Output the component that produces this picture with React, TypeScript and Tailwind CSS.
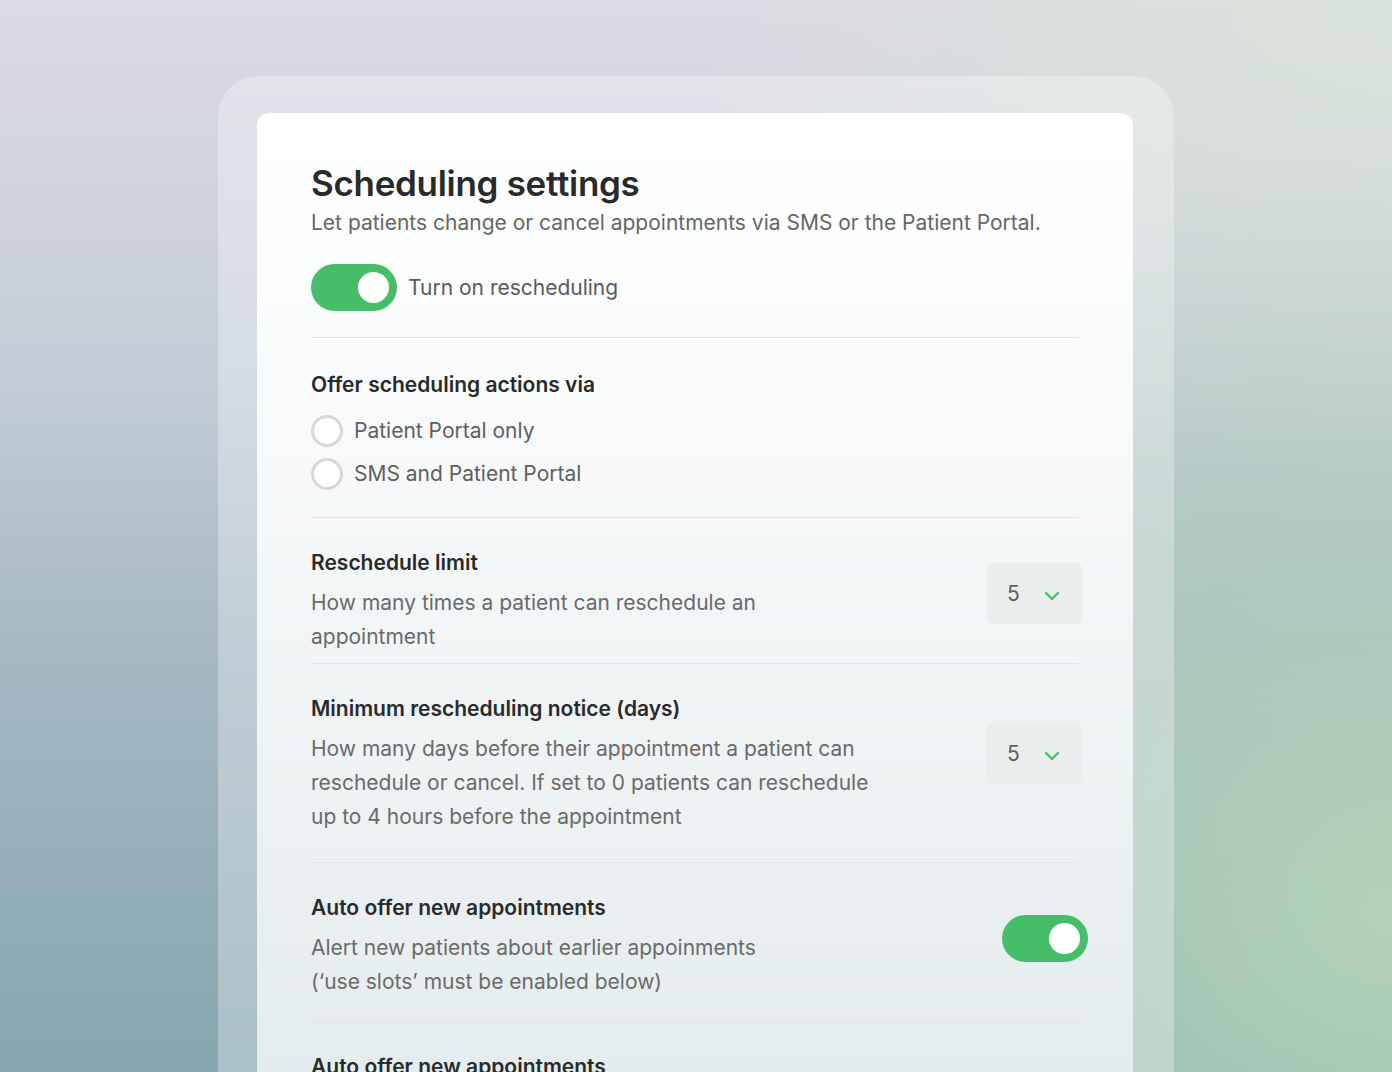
function Toggle() {
  return (
    <div className="flex h-[47px] w-[86px] shrink-0 items-center justify-end rounded-full bg-[#46be69] pr-2">
      <div className="h-[31px] w-[31px] rounded-full bg-white" />
    </div>
  );
}

function Radio({ label }: { label: string }) {
  return (
    <div className="flex items-center gap-[11px]">
      <div className="h-8 w-8 rounded-full border-[3px] border-[#d6d7d8] bg-white" />
      <span className="text-[21px] text-[#5f5f5f]">{label}</span>
    </div>
  );
}

function Select({ top }: { top: string }) {
  return (
    <div className={`${top} -mr-[3px] flex h-[61px] w-[95px] shrink-0 items-center rounded-md bg-[#e9edee] pl-5 pr-[22px]`}>
      <span className="text-[21px] text-[#5f5f5f]">5</span>
      <svg className="ml-auto mt-1" width="16" height="10" viewBox="0 0 16 10" fill="none">
        <path d="M2 2l6 6 6-6" stroke="#46be69" strokeWidth="2.2" strokeLinecap="round" strokeLinejoin="round" />
      </svg>
    </div>
  );
}

function Row({
  title,
  children,
  right,
}: {
  title: string;
  children: React.ReactNode;
  right: React.ReactNode;
}) {
  return (
    <div className="flex items-start justify-between">
      <div className="max-w-[560px]">
        <h3 className="text-[21px] font-semibold leading-[28px] text-[#2a2a2a]">{title}</h3>
        <p className="mt-[9px] text-[21px] leading-[34px] text-[#6a6a6a]">{children}</p>
      </div>
      {right}
    </div>
  );
}

export default function App() {
  return (
    <div className="h-[1072px] overflow-hidden bg-[radial-gradient(ellipse_60%_70%_at_100%_85%,#b2d3b7_0%,rgba(178,211,183,0)_100%),radial-gradient(ellipse_50%_45%_at_100%_0%,#d9e3d9_0%,rgba(217,227,217,0)_100%),linear-gradient(to_bottom,#dcdae4_0%,#c3cdd7_35%,#a6b9c5_60%,#85a6b0_100%)] font-['Inter',sans-serif]">
      <div className="mx-auto mt-[76px] w-[956px] rounded-t-[40px] bg-white/30 pl-[39px] pt-[37px]">
        <div className="h-[1000px] w-[876px] rounded-t-xl bg-[linear-gradient(to_bottom,#ffffff_0%,#f7f9fa_35%,#e3ebed_100%)] px-[54px] pt-[48px]">
          <h1 className="text-[35px] font-semibold leading-[44px] tracking-[-0.3px] text-[#2a2a2a]">
            Scheduling settings
          </h1>
          <p className="mt-[4px] text-[21px] leading-[28px] text-[#666]">
            Let patients change or cancel appointments via SMS or the Patient Portal.
          </p>
          <div className="mt-[27px] flex items-center gap-[11px]">
            <Toggle />
            <span className="text-[21px] text-[#5a5a5a]">Turn on rescheduling</span>
          </div>

          <div className="mt-[26px] border-t border-[#e1e4e6]" />

          <div className="pt-[33px] pb-[27px]">
            <h3 className="text-[21px] font-semibold leading-[28px] text-[#2a2a2a]">
              Offer scheduling actions via
            </h3>
            <div className="mt-[16px] flex flex-col gap-[11px]">
              <Radio label="Patient Portal only" />
              <Radio label="SMS and Patient Portal" />
            </div>
          </div>

          <div className="border-t border-[#e1e4e6]" />

          <div className="pt-[31px] pb-[9px]">
            <Row title="Reschedule limit" right={<Select top="mt-[14px]" />}>
              How many times a patient can reschedule an appointment
            </Row>
          </div>

          <div className="border-t border-[#e1e4e6]" />

          <div className="pt-[31px] pb-[28px]">
            <Row title="Minimum rescheduling notice (days)" right={<Select top="mt-[28px]" />}>
              How many days before their appointment a patient can reschedule or cancel. If set to 0
              patients can reschedule up to 4 hours before the appointment
            </Row>
          </div>

          <div className="border-t border-[#e1e4e6]" />

          <div className="pt-[31px] pb-[23px]">
            <Row
              title="Auto offer new appointments"
              right={
                <div className="-mr-[9px] pt-[21px]">
                  <Toggle />
                </div>
              }
            >
              Alert new patients about earlier appoinments
              <br />
              (‘use slots’ must be enabled below)
            </Row>
          </div>

          <div className="border-t border-[#e1e4e6]" />

          <div className="pt-[30px]">
            <h3 className="text-[21px] font-semibold leading-[28px] text-[#2a2a2a]">
              Auto offer new appointments
            </h3>
          </div>
        </div>
      </div>
    </div>
  );
}
